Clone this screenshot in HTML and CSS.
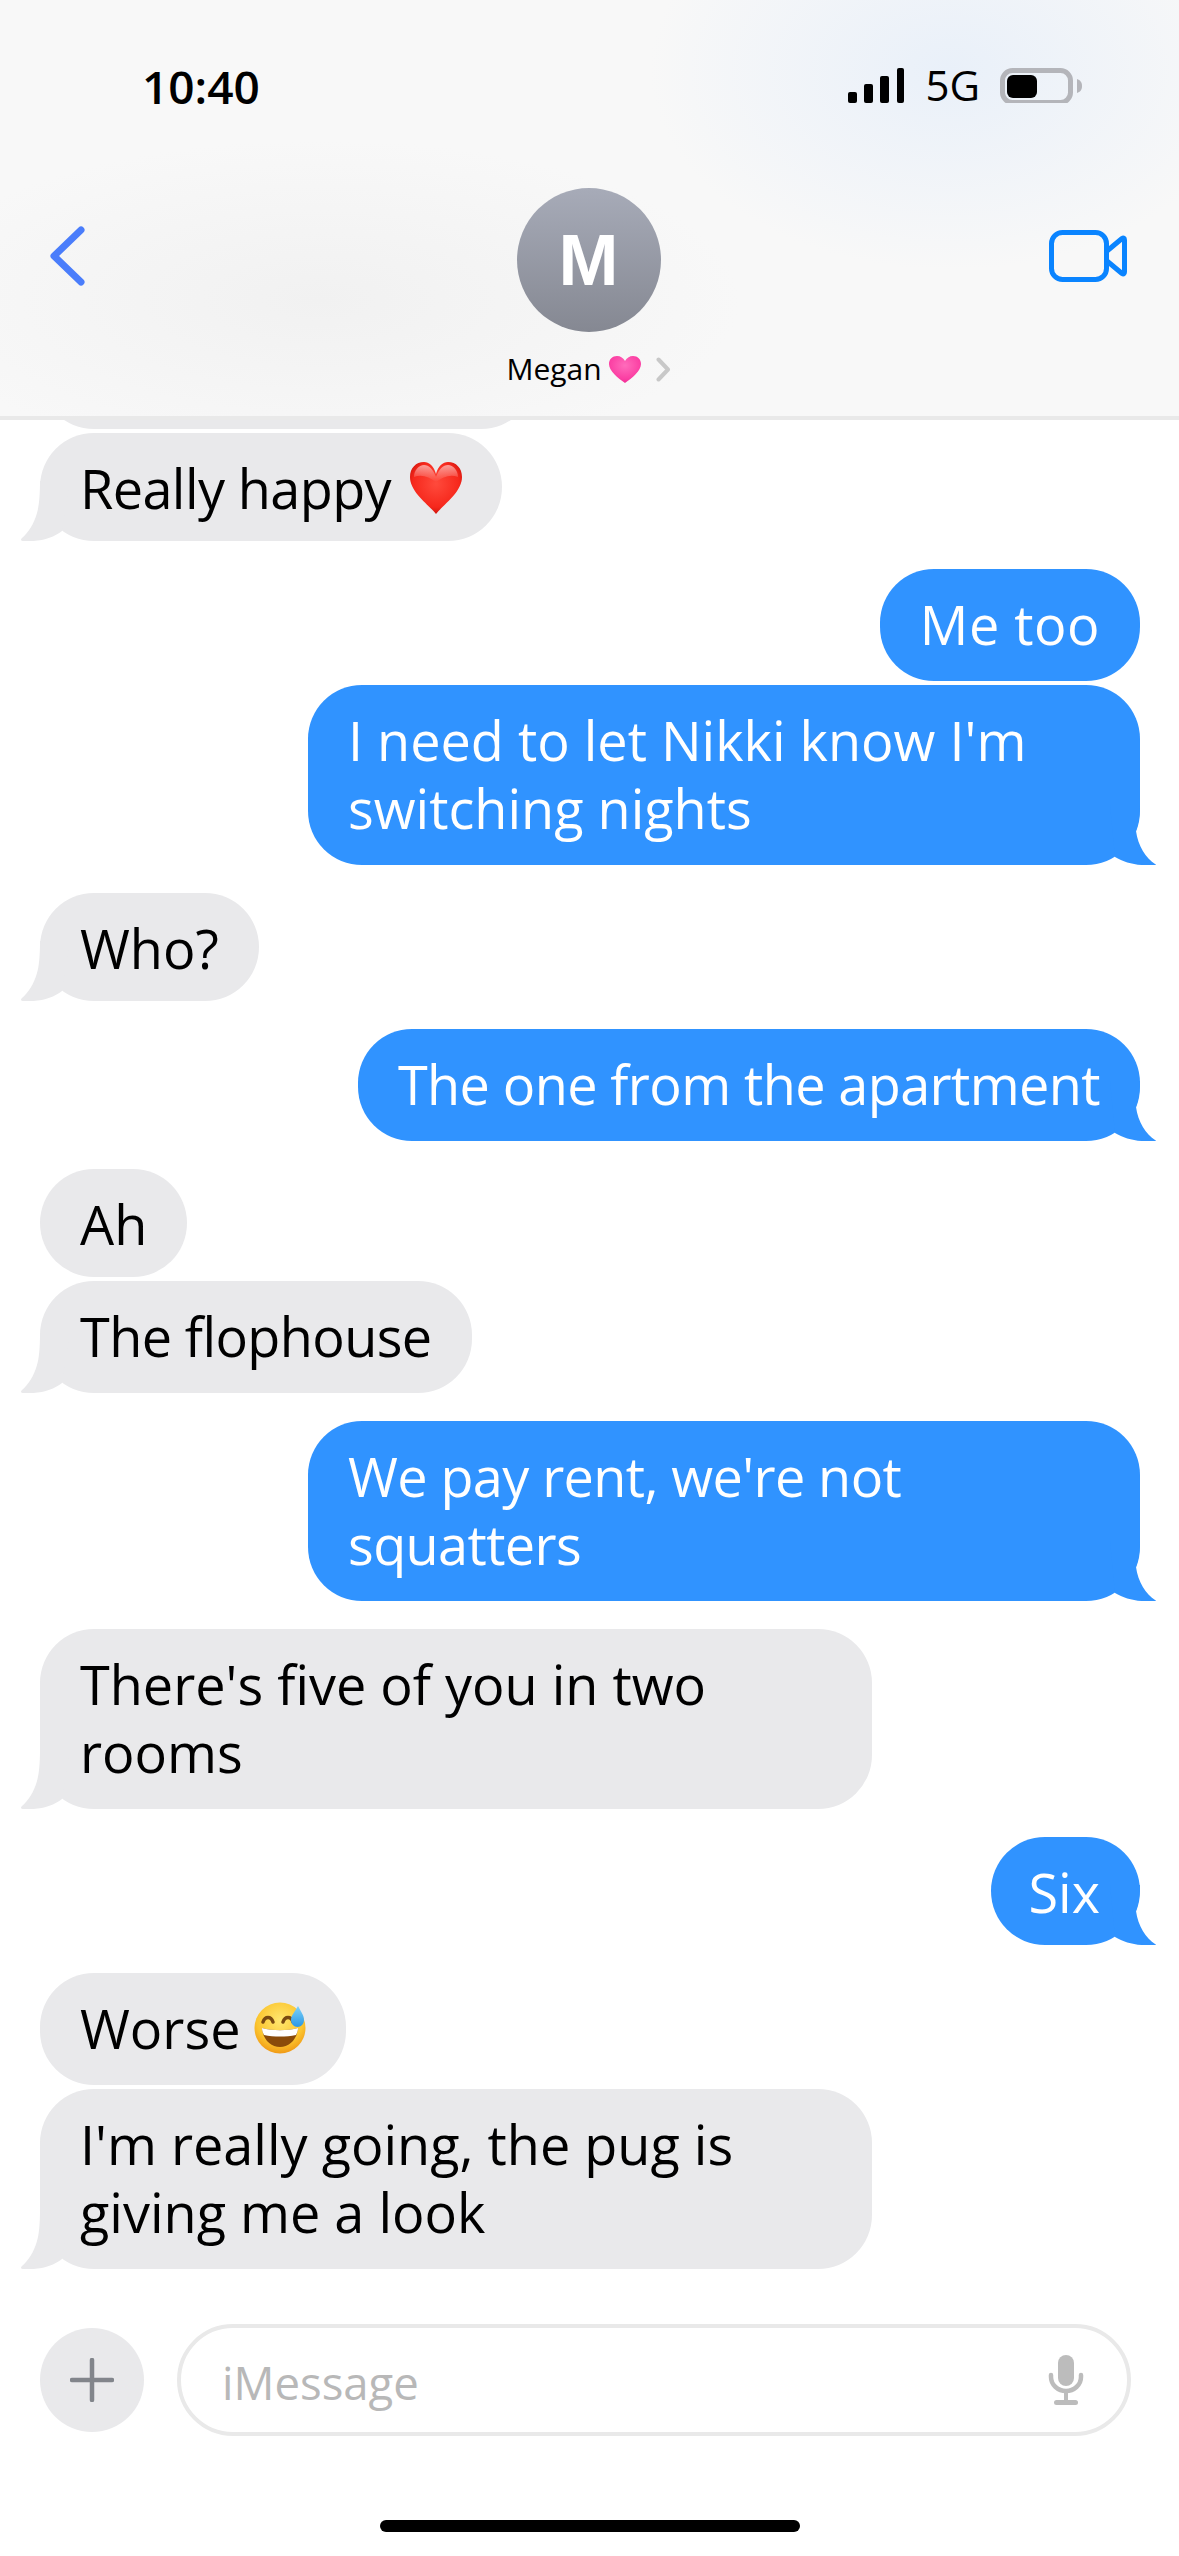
FILE: index.html
```html
<!DOCTYPE html>
<html lang="en">

<head>
    <meta charset="UTF-8">
    <meta name="viewport" content="width=device-width, initial-scale=1.0">
    <title>Megan</title>
    <link rel="stylesheet" href="styles.css">
</head>

<body>
    <svg class="defs" aria-hidden="true">
        <defs>
            <symbol id="tail-in" viewBox="0 0 50 60">
                <path d="M20 0C20 15 19 25 17 32C14 43 8 52 2 57C0 59 1 60 4 60C20 61 33 57 42 50L50 0Z" />
            </symbol>
            <symbol id="tail-out" viewBox="0 0 50 60">
                <path d="M30 0C30 10 28 20 26 26C28 41 36 53 45 59C47 60 46 60 42 60C28 61 15 58 5 52L0 0Z" />
            </symbol>
            <radialGradient id="red-heart" cx="0.5" cy="0.42" r="0.62">
                <stop offset="0" stop-color="#ff4a3c" />
                <stop offset="0.72" stop-color="#f6281c" />
                <stop offset="1" stop-color="#c40f08" />
            </radialGradient>
            <linearGradient id="heart-shine" x1="0" y1="0" x2="0" y2="1">
                <stop offset="0" stop-color="#fff" stop-opacity="0.55" />
                <stop offset="1" stop-color="#fff" stop-opacity="0" />
            </linearGradient>
            <radialGradient id="pink-heart" cx="0.5" cy="0.35" r="0.7">
                <stop offset="0" stop-color="#ff6cbb" />
                <stop offset="0.7" stop-color="#fb3fa3" />
                <stop offset="1" stop-color="#ee2a92" />
            </radialGradient>
            <radialGradient id="face" cx="0.5" cy="0.35" r="0.7">
                <stop offset="0" stop-color="#ffe770" />
                <stop offset="0.65" stop-color="#fbc52f" />
                <stop offset="1" stop-color="#ee8f10" />
            </radialGradient>
            <linearGradient id="drop" x1="0" y1="0" x2="0" y2="1">
                <stop offset="0" stop-color="#7fd3f8" />
                <stop offset="1" stop-color="#2a97e6" />
            </linearGradient>
        </defs>
    </svg>

    <div class="page-container">
        <header class="chat-header">
            <div class="status-bar">
                <span class="status-time">10:40</span>
                <div class="status-icons">
                    <svg class="signal" viewBox="0 0 56 35" width="56" height="35">
                        <rect x="0" y="24" width="9" height="11" rx="2" />
                        <rect x="16" y="16" width="9" height="19" rx="2" />
                        <rect x="32" y="8" width="9" height="27" rx="2" />
                        <rect x="49" y="0" width="7" height="35" rx="2" />
                    </svg>
                    <span class="status-network">5G</span>
                    <svg class="battery" viewBox="0 0 82 35" width="82" height="35">
                        <rect x="2.5" y="2.5" width="68" height="32" rx="10" fill="none" stroke="#b4b5ba" stroke-width="5" />
                        <rect x="7" y="7" width="30" height="23" rx="6" fill="#000" />
                        <path d="M77 11C80 12 82 14 82 18C82 22 80 24 77 25Z" fill="#b4b5ba" />
                    </svg>
                </div>
            </div>
            <div class="nav-bar">
                <svg class="back-icon" viewBox="0 0 35 60" width="35" height="60">
                    <path d="M31 4L4 30L31 56" fill="none" stroke="#4a7dfb" stroke-width="7" stroke-linecap="round" stroke-linejoin="round" />
                </svg>
                <div class="contact">
                    <div class="avatar">M</div>
                    <div class="contact-name">
                        <span>Megan</span>
                        <svg class="name-heart" viewBox="0 0 32 27" width="32" height="27">
                            <path d="M16 27C9 22 0 15 0 8C0 3 3.500 0 8 0C11.500 0 14.500 2 16 5C17.500 2 20.500 0 24 0C28.500 0 32 3 32 8C32 15 23 22 16 27Z" fill="url(#pink-heart)" />
                        </svg>
                        <svg class="name-chevron" viewBox="0 0 15 25" width="15" height="25">
                            <path d="M2.500 2.500L12 12.500L2.500 22.500" fill="none" stroke="#c8c8c8" stroke-width="4" stroke-linecap="round" stroke-linejoin="round" />
                        </svg>
                    </div>
                </div>
                <svg class="video-icon" viewBox="0 0 78 52" width="78" height="52">
                    <rect x="2.500" y="2.500" width="55" height="47" rx="11" fill="none" stroke="#0a84ff" stroke-width="5" />
                    <path d="M58 21L73 8.500C74.500 7.500 75.500 8 75.500 10V42C75.500 44 74.500 44.500 73 43.500L58 31" fill="none" stroke="#0a84ff" stroke-width="5" stroke-linejoin="round" />
                </svg>
            </div>
        </header>

        <main class="thread">
            <div class="bubble incoming clipped">&nbsp;</div>
            <div class="bubble incoming short tight">Really happy
                <svg class="emoji emoji-heart" viewBox="0 0 52 52" width="52" height="52">
                    <path d="M26 52C18 42 0 30 0 15C0 6 6 0 14 0C19 0 24 4 26 12C28 4 33 0 38 0C46 0 52 6 52 15C52 30 34 42 26 52Z" fill="url(#red-heart)" />
                    <path d="M4 15C4 8 9 3 14 3C19 3 23 7 26 15C29 7 33 3 38 3C43 3 48 8 48 15C40 12 33 15 26 20C19 15 12 12 4 15Z" fill="url(#heart-shine)" />
                </svg>
                <svg class="tail tail-in"><use href="#tail-in" /></svg>
            </div>

            <div class="bubble outgoing gap loose">Me too</div>
            <div class="bubble outgoing wide">I need to let Nikki know I'm<br>switching nights
                <svg class="tail tail-out"><use href="#tail-out" /></svg>
            </div>

            <div class="bubble incoming short gap">Who?
                <svg class="tail tail-in"><use href="#tail-in" /></svg>
            </div>

            <div class="bubble outgoing gap tight">The one from the apartment
                <svg class="tail tail-out"><use href="#tail-out" /></svg>
            </div>

            <div class="bubble incoming short gap">Ah</div>
            <div class="bubble incoming tight">The flophouse
                <svg class="tail tail-in"><use href="#tail-in" /></svg>
            </div>

            <div class="bubble outgoing wide gap tight">We pay rent, we're not<br>squatters
                <svg class="tail tail-out"><use href="#tail-out" /></svg>
            </div>

            <div class="bubble incoming wide gap">There's five of you in two<br>rooms
                <svg class="tail tail-in"><use href="#tail-in" /></svg>
            </div>

            <div class="bubble outgoing short gap narrow">Six
                <svg class="tail tail-out"><use href="#tail-out" /></svg>
            </div>

            <div class="bubble incoming gap">Worse
                <svg class="emoji emoji-face" viewBox="0 0 52 52" width="52" height="52">
                    <circle cx="26" cy="26" r="25.500" fill="url(#face)" />
                    <path d="M9 20C11 14 17 14 19 20M29 20C31 14 37 14 39 20" fill="none" stroke="#7a4a10" stroke-width="3.500" stroke-linecap="round" />
                    <path d="M8 26C18 29 34 29 44 26C43 38 35 45 26 45C17 45 9 38 8 26Z" fill="#8a4b0a" />
                    <path d="M8 26C18 29 34 29 44 26C44 29 43 31 42 33C32 35 20 35 10 33C9 31 8 29 8 26Z" fill="#fff" />
                    <path d="M44 4C47 10 50 13 50 18C50 22 47 25 43.500 25C40 25 37 22 37 18C37 13 41 10 44 4Z" fill="url(#drop)" />
                </svg>
            </div>
            <div class="bubble incoming wide">I'm really going, the pug is<br>giving me a look
                <svg class="tail tail-in"><use href="#tail-in" /></svg>
            </div>
        </main>

        <div class="composer">
            <div class="plus-btn">
                <svg viewBox="0 0 44 44" width="44" height="44">
                    <path d="M22 2V42M2 22H42" fill="none" stroke="#82858b" stroke-width="4.500" stroke-linecap="round" />
                </svg>
            </div>
            <div class="message-field">
                <span class="placeholder">iMessage</span>
                <svg class="mic-icon" viewBox="0 0 36 50" width="36" height="50">
                    <rect x="10" y="0" width="16" height="31" rx="8" fill="#bcbcbc" />
                    <path d="M3 20V22C3 30 10 36 18 36C26 36 33 30 33 22V20" fill="none" stroke="#bcbcbc" stroke-width="4.500" stroke-linecap="round" />
                    <path d="M18 36V46" stroke="#bcbcbc" stroke-width="4" />
                    <rect x="6" y="45" width="24" height="5" rx="2.500" fill="#bcbcbc" />
                </svg>
            </div>
        </div>

        <div class="home-area">
            <div class="home-bar"></div>
        </div>
    </div>
</body>

</html>
```

FILE: styles.css
```css
:root {
    --incoming: #e9e9eb;
    --outgoing: #3093ff;
    --border-color: #e9e9e9;
    --placeholder: #b8b8b8;
}

* {
    box-sizing: border-box;
    margin: 0;
    padding: 0;
}

body {
    font-family: 'Open Sans', 'Noto Sans', sans-serif;
    color: #000;
    background-color: #fff;
    height: 100vh;
    overflow: hidden;
}

.defs {
    display: block;
    width: 0;
    height: 0;
}

.page-container {
    display: flex;
    flex-direction: column;
    height: 100vh;
}

/* header */
.chat-header {
    height: 420px;
    flex-shrink: 0;
    border-bottom: 4px solid var(--border-color);
    background:
        radial-gradient(ellipse 300px 200px at 950px 70px, #e9f0f9 0%, rgba(233, 240, 249, 0) 100%),
        radial-gradient(ellipse 420px 160px at 320px 300px, #f1f1f1 0%, rgba(241, 241, 241, 0) 100%),
        #f8f8f8;
}

.status-bar {
    height: 116px;
    padding: 60px 97px 0 142px;
    display: flex;
    justify-content: space-between;
    align-items: flex-start;
}

.status-time {
    font-size: 46px;
    line-height: 52px;
    font-weight: 600;
}

.status-icons {
    display: flex;
    align-items: flex-start;
    margin-top: 8px;
}

.status-network {
    font-size: 42px;
    line-height: 34px;
    margin: 0 20px 0 21px;
}

.nav-bar {
    display: grid;
    grid-template-columns: 1fr auto 1fr;
    padding: 0 52px 0 50px;
}

.back-icon {
    margin-top: 110px;
}

.video-icon {
    margin-top: 114px;
    justify-self: end;
}

.contact {
    padding-top: 72px;
    display: flex;
    flex-direction: column;
    align-items: center;
}

.avatar {
    width: 144px;
    height: 144px;
    border-radius: 50%;
    background: linear-gradient(#a7abb8, #858892);
    color: #fff;
    font-family: 'Liberation Sans', sans-serif;
    font-size: 72px;
    font-weight: bold;
    display: flex;
    align-items: center;
    justify-content: center;
}

.contact-name {
    display: flex;
    align-items: center;
    margin-top: 21px;
    font-size: 30px;
    line-height: 32px;
}

.name-heart {
    margin-left: 7px;
}

.name-chevron {
    margin-left: 15px;
}

/* messages */
.thread {
    flex: 1;
    min-height: 0;
    overflow: hidden;
    padding: 0 39px 0 40px;
    display: flex;
    flex-direction: column;
}

.bubble {
    position: relative;
    flex-shrink: 0;
    padding: 21px 40px 23px;
    margin-top: 4px;
    border-radius: 54px;
    font-size: 54px;
    line-height: 68px;
    white-space: nowrap;
}

.bubble.gap {
    margin-top: 28px;
}

.bubble.short {
    padding-bottom: 19px;
}

.bubble.wide {
    width: 832px;
}

.bubble.tight {
    letter-spacing: -0.6px;
}

.bubble.loose {
    letter-spacing: 0.5px;
}

.bubble.narrow {
    padding-left: 37px;
}

.bubble.clipped {
    width: 495px;
    height: 108px;
    margin-top: -99px;
}

.incoming {
    align-self: flex-start;
    background-color: var(--incoming);
    fill: var(--incoming);
}

.outgoing {
    align-self: flex-end;
    background-color: var(--outgoing);
    fill: var(--outgoing);
    color: #fff;
}

.emoji {
    vertical-align: -5px;
}

.emoji-heart {
    margin-left: 6px;
}

.emoji-face {
    margin-left: -1px;
}

.tail {
    position: absolute;
    bottom: 0;
    width: 50px;
    height: 60px;
}

.tail-in {
    left: -20px;
}

.tail-out {
    right: -20px;
}

/* composer */
.composer {
    flex-shrink: 0;
    height: 112px;
    padding: 0 48px 0 40px;
    display: flex;
    align-items: center;
    gap: 33px;
}

.plus-btn {
    width: 104px;
    height: 104px;
    border-radius: 50%;
    background-color: var(--incoming);
    display: flex;
    align-items: center;
    justify-content: center;
    flex-shrink: 0;
}

.message-field {
    flex: 1;
    height: 112px;
    border: 4px solid var(--border-color);
    border-radius: 56px;
    padding: 0 43px 0 41px;
    display: flex;
    align-items: center;
    justify-content: space-between;
}

.placeholder {
    font-size: 45.500px;
    margin-top: 3px;
    color: var(--placeholder);
}

.home-area {
    flex-shrink: 0;
    height: 120px;
    padding-top: 84px;
    display: flex;
    justify-content: center;
}

.home-bar {
    width: 420px;
    height: 12px;
    border-radius: 6px;
    background-color: #000;
}
```
